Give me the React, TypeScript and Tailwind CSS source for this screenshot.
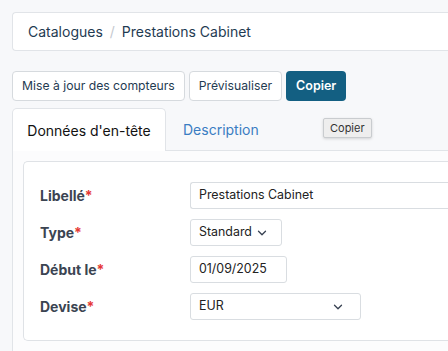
import React from 'react';

const Chevron = () => (
  <svg width="14" height="14" viewBox="0 0 24 24" fill="none" stroke="#374151" strokeWidth="2.2" strokeLinecap="round" strokeLinejoin="round">
    <path d="m6 9 6 6 6-6" />
  </svg>
);

const Label = ({ text }: { text: string }) => (
  <div className="w-[150px] text-[14px] font-bold text-[#3b4452]">
    {text}
    <span className="text-[#e53935]">*</span>
  </div>
);

export default function App() {
  return (
    <div className="min-h-[351px] bg-[#f7f8fa] pl-3 pt-3 font-['Inter',sans-serif] overflow-hidden">
      <div className="h-[39px] rounded-l-[4px] border border-r-0 border-[#e1e4e8] bg-white flex items-center pl-[15px] text-[14px] text-[#1f3b52]">
        <span>Catalogues</span>
        <span className="mx-[7px] text-[#c4c9cf]">/</span>
        <span>Prestations Cabinet</span>
      </div>

      <div className="mt-[20px] flex gap-[4px]">
        <button className="h-[30px] px-[9px] rounded-[4px] border border-[#d6dade] bg-white text-[12.2px] text-[#1f3b52]">
          Mise à jour des compteurs
        </button>
        <button className="h-[30px] px-[9px] rounded-[4px] border border-[#d6dade] bg-white text-[12.2px] text-[#1f3b52]">
          Prévisualiser
        </button>
        <button className="h-[30px] px-[10px] rounded-[4px] bg-[#135f82] text-[12.5px] font-semibold text-white">
          Copier
        </button>
      </div>

      <div className="relative mt-[7px] flex h-[43px] border-b border-[#e1e4e8]">
        <div className="-mb-px w-[154px] rounded-t-[5px] border border-b-0 border-[#e1e4e8] bg-white flex items-center justify-center text-[14px] text-[#111]">
          Données d'en-tête
        </div>
        <div className="ml-[17px] flex items-center text-[14px] text-[#3a7dc2]">Description</div>
        <div className="absolute left-[311px] top-[10px] h-[20px] px-[6px] rounded-[2px] border border-[#c9cccf] bg-[#eeeeee] text-[11px] leading-[18px] text-[#333] shadow-[0_1px_3px_rgba(0,0,0,0.15)]">
          Copier
        </div>
      </div>

      <div className="border-l border-[#e1e4e8] bg-[#fcfcfd] pl-[10px] pt-[10px] pb-[20px]">
        <div className="rounded-l-[5px] border border-r-0 border-[#dfe2e6] bg-white pl-[16px] pt-[20px] pb-[20px] flex flex-col gap-[10px]">
          <div className="flex items-center h-[27px]">
            <Label text="Libellé" />
            <div className="flex-1 h-[27px] rounded-l-[3px] border border-r-0 border-[#d9dde1] flex items-center pl-[8px] text-[12.4px] text-[#222]">
              Prestations Cabinet
            </div>
          </div>
          <div className="flex items-center h-[27px]">
            <Label text="Type" />
            <div className="w-[92px] h-[27px] rounded-[3px] border border-[#d9dde1] flex items-center justify-between pl-[8px] pr-[12px] text-[12.4px] text-[#222]">
              Standard
              <Chevron />
            </div>
          </div>
          <div className="flex items-center h-[27px]">
            <Label text="Début le" />
            <div className="w-[97px] h-[27px] rounded-[3px] border border-[#d9dde1] flex items-center pl-[8px] text-[12.4px] text-[#222]">
              01/09/2025
            </div>
          </div>
          <div className="flex items-center h-[27px]">
            <Label text="Devise" />
            <div className="w-[171px] h-[27px] rounded-[3px] border border-[#d9dde1] flex items-center justify-between pl-[8px] pr-[15px] text-[12.4px] text-[#222]">
              EUR
              <Chevron />
            </div>
          </div>
        </div>
      </div>
    </div>
  );
}
